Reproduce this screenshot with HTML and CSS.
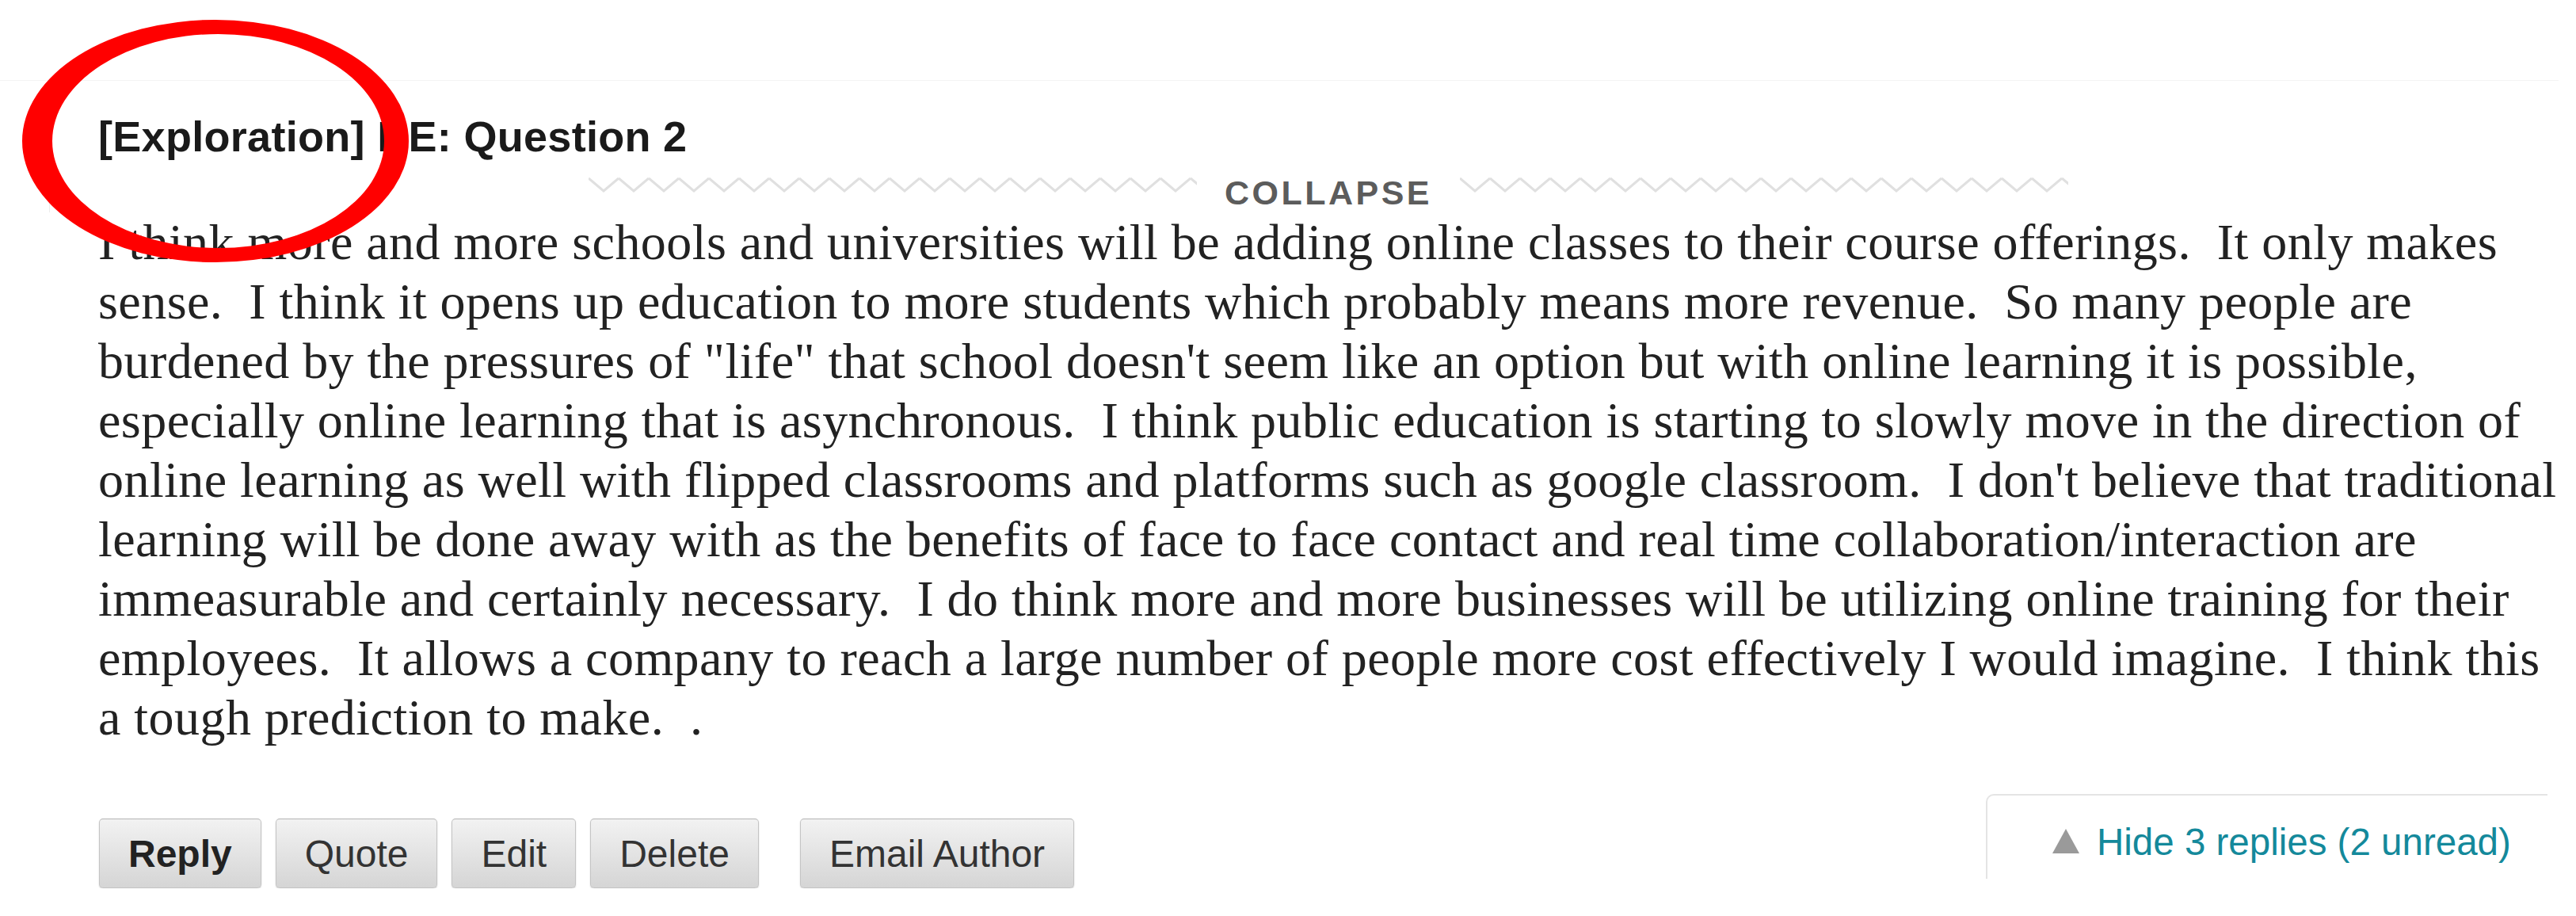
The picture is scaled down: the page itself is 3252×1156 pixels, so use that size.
FILE: index.html
```html
<!DOCTYPE html>
<html lang="en">
<head>
    <meta charset="UTF-8">
    <title>[Exploration] RE: Question 2</title>
    <link rel="stylesheet" href="styles.css">
</head>
<body>
    <div class="page">
        <div class="crumbs"></div>

        <div class="post-head">
            <h2 class="post-title">[Exploration] RE: Question 2</h2>
            <div class="collapse-row">
                <svg class="zigzag" width="768" height="20" viewBox="0 0 768 20">
                    <defs>
                        <pattern id="zzLeft" width="38" height="20" patternUnits="userSpaceOnUse">
                            <polyline points="0,2 19,18 38,2" fill="none" stroke="#e0e0e0" stroke-width="3"/>
                        </pattern>
                    </defs>
                    <rect width="768" height="20" fill="url(#zzLeft)"/>
                </svg>
                <span class="collapse-label">COLLAPSE</span>
                <svg class="zigzag" width="768" height="20" viewBox="0 0 768 20">
                    <defs>
                        <pattern id="zzRight" width="38" height="20" patternUnits="userSpaceOnUse">
                            <polyline points="0,2 19,18 38,2" fill="none" stroke="#e0e0e0" stroke-width="3"/>
                        </pattern>
                    </defs>
                    <rect width="768" height="20" fill="url(#zzRight)"/>
                </svg>
            </div>
        </div>

        <div class="post-body">
            I think more and more schools and universities will be adding online classes to their course offerings.&nbsp; It only makes<br>
            sense.&nbsp; I think it opens up education to more students which probably means more revenue.&nbsp; So many people are<br>
            burdened by the pressures of "life" that school doesn't seem like an option but with online learning it is possible,<br>
            especially online learning that is asynchronous.&nbsp; I think public education is starting to slowly move in the direction of<br>
            online learning as well with flipped classrooms and platforms such as google classroom.&nbsp; I don't believe that traditional<br>
            learning will be done away with as the benefits of face to face contact and real time collaboration/interaction are<br>
            immeasurable and certainly necessary.&nbsp; I do think more and more businesses will be utilizing online training for their<br>
            employees.&nbsp; It allows a company to reach a large number of people more cost effectively I would imagine.&nbsp; I think this<br>
            a tough prediction to make.&nbsp; .
        </div>

        <div class="actions">
            <div class="buttons">
                <button class="button primary">Reply</button>
                <button class="button">Quote</button>
                <button class="button">Edit</button>
                <button class="button">Delete</button>
                <button class="button email">Email Author</button>
            </div>
            <div class="replies-toggle">
                <svg class="arrow" width="34" height="31" viewBox="0 0 34 31">
                    <polygon points="17,0 34,31 0,31" fill="#9a9a9a"/>
                </svg>
                <a class="replies-link" href="#">Hide 3 replies (2 unread)</a>
            </div>
        </div>
    </div>

    <!-- red marker drawn over the title -->
    <svg class="marker" width="540" height="350" viewBox="0 0 540 350">
        <path fill="#ff0000" fill-rule="evenodd"
              d="M28,178 A244,153 0 1,0 516,178 A244,153 0 1,0 28,178 Z
                 M66,178 A209.5,135 0 1,0 485,178 A209.5,135 0 1,0 66,178 Z"/>
    </svg>
</body>
</html>
```

FILE: styles.css
```css
body {
    margin: 0;
    background-color: #FFFFFF;
    color: #222222;
    font-family: "Liberation Sans", Arial, sans-serif;
}

.page {
    padding-right: 22px;
}

.crumbs {
    height: 101px;
    border-bottom: 1px solid #f3f3f3;
}

.post-head {
    margin-left: 62px;
    border-left: 1px solid #ececec;
    padding-left: 61px;
    padding-top: 40px;
}

.post-title {
    margin: 0;
    font-size: 54px;
    line-height: 60px;
    font-weight: bold;
    letter-spacing: 0.3px;
    color: #1a1a1a;
}

.collapse-row {
    display: flex;
    justify-content: center;
    align-items: center;
    gap: 35px;
    margin-top: 16px;
    height: 50px;
}

.zigzag {
    display: block;
    margin-bottom: 20px;
}

.collapse-label {
    font-size: 43px;
    line-height: 50px;
    font-weight: bold;
    letter-spacing: 3.5px;
    color: #5c5c5c;
}

.post-body {
    padding-left: 124px;
    font-family: "Liberation Serif", Georgia, serif;
    font-size: 64px;
    line-height: 75px;
    letter-spacing: 0.45px;
    white-space: nowrap;
    color: #222222;
}

.actions {
    display: flex;
    justify-content: space-between;
    align-items: flex-start;
    margin-top: 59px;
    padding-left: 125px;
}

.buttons {
    display: flex;
    margin-top: 31px;
}

.button {
    height: 88px;
    padding: 0 36px;
    margin-right: 18px;
    font-family: "Liberation Sans", Arial, sans-serif;
    font-size: 48px;
    color: #333333;
    background: linear-gradient(#f2f2f2, #d5d5d5);
    border: 1px solid #c4c4c4;
    border-top-color: #b5b5b5;
    border-radius: 5px;
    box-shadow: 0 1px 2px rgba(0, 0, 0, 0.15);
    cursor: pointer;
}

.button.primary {
    font-weight: bold;
    color: #222222;
}

.button.email {
    margin-left: 34px;
}

.replies-toggle {
    display: flex;
    align-items: flex-start;
    gap: 22px;
    width: 625px;
    height: 72px;
    padding: 33px 0 0 82px;
    margin-right: 14px;
    border-top: 2px solid #e4e4e4;
    border-left: 2px solid #e4e4e4;
    border-top-left-radius: 10px;
}

.arrow {
    display: block;
    margin-top: 9px;
}

.replies-link {
    font-size: 47.5px;
    line-height: 52px;
    color: #14899b;
    text-decoration: none;
}

.marker {
    position: absolute;
    left: 0;
    top: 0;
}
```
